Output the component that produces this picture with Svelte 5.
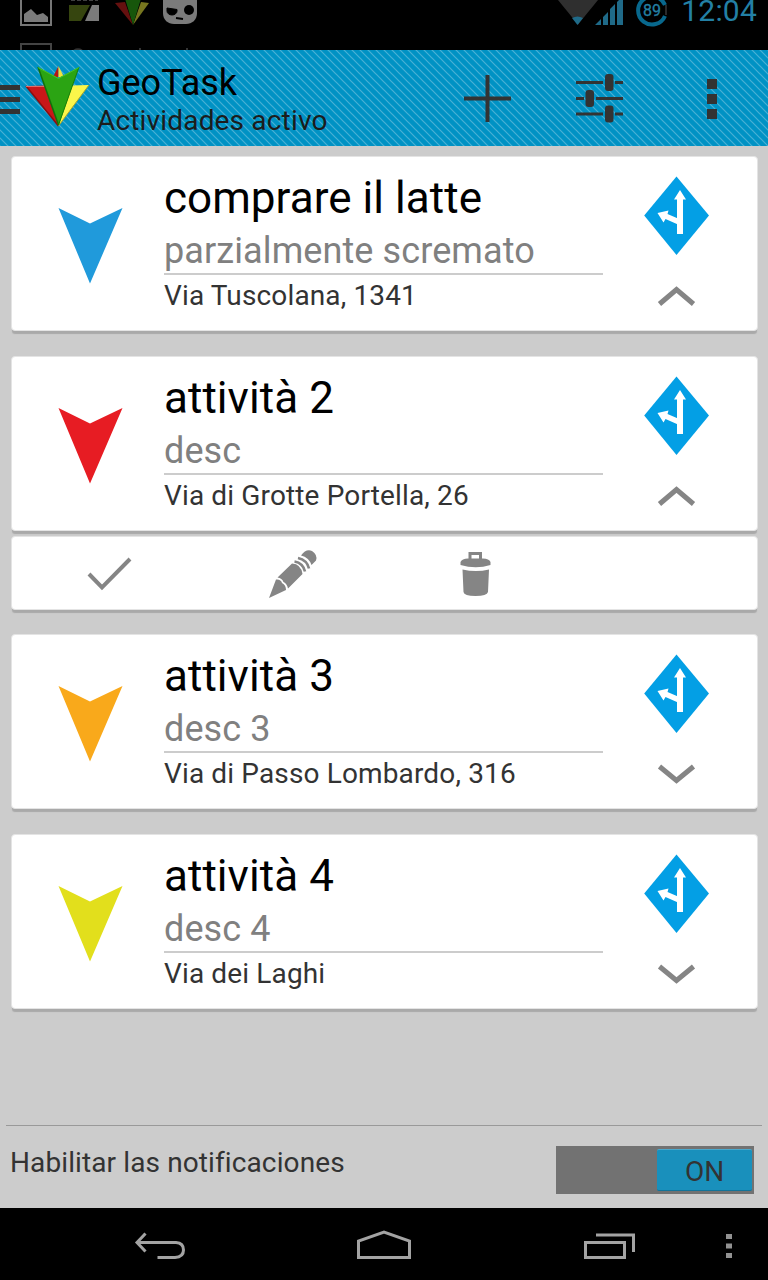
<script lang="ts">
    let notifications = $state(true);

    let tasks = $state([
        { title: 'comprare il latte', desc: 'parzialmente scremato', address: 'Via Tuscolana, 1341', color: '#209adb', up: true, open: false },
        { title: 'attività 2', desc: 'desc', address: 'Via di Grotte Portella, 26', color: '#e71c23', up: true, open: true },
        { title: 'attività 3', desc: 'desc 3', address: 'Via di Passo Lombardo, 316', color: '#f9a91b', up: false, open: false },
        { title: 'attività 4', desc: 'desc 4', address: 'Via dei Laghi', color: '#e2df1c', up: false, open: false }
    ]);

    function toggle(i: number) {
        tasks[i].open = !tasks[i].open;
        tasks[i].up = tasks[i].open;
    }
</script>

<div class="screen">
    <div class="status-bar">
        <svg class="status-icons" width="320" height="50" viewBox="0 0 320 50">
            <path d="M21 -6V25H51V-6" fill="none" stroke="#777" stroke-width="2" />
            <path d="M24 22V14L31 9L37 15L43 13L48 17V22Z" fill="#7b7b7b" />
            <path d="M69 5H90L81 21H69Z" fill="#36450f" />
            <path d="M92 5H99V21H85Z" fill="#7b7b7b" />
            <path d="M71 0H98" stroke="#555" stroke-width="1.5" stroke-dasharray="4 2" />
            <path d="M115 3L125 2L133 25Z" fill="#65100f" />
            <path d="M149 3L141 2L133 25Z" fill="#77761f" />
            <path d="M123 -8L133 -2L143 -8L133 25Z" fill="#17560b" />
            <path d="M163 0H197V13C197 20 192 24 186 24H174C168 24 163 20 163 13Z" fill="#7b7b7b" />
            <path d="M167 8L177 9.500V11A5 4 0 0 1 167 11Z" fill="#000" stroke="#000" />
            <circle cx="189" cy="10" r="5" fill="#000" />
            <path d="M176 18L183 19" stroke="#000" stroke-width="2" />
            <path d="M21 50V44H51V50" fill="none" stroke="#444" stroke-width="2" />
            <path d="M74 50.5Q78 48 82 50.5M140 48V50M187 48V50" fill="none" stroke="#333" stroke-width="2" />
        </svg>
        <div class="status-right">
            <svg width="115" height="50" viewBox="555 0 115 50">
                <path d="M559 0H599L579 24.5Z" fill="#2f2f2f" />
                <path d="M573 18Q578.500 15 584 18L578.500 25Z" fill="#1f6a88" />
                <path d="M596 25L602 19V25ZM604 25V17L609 12V25ZM611 25V9L616 4V25ZM618 25V2L620 0H624V25Z" fill="#1f6a88" />
                <path d="M666 16A14 14 0 1 1 666 5" fill="none" stroke="#08688d" stroke-width="4" />
                <path d="M667 15V5" stroke="#555" />
                <text x="653" y="16" text-anchor="middle" font-size="16" fill="#2380a5" stroke="#2380a5" stroke-width="0.3">89</text>
            </svg>
            <span class="clock">12:04</span>
        </div>
    </div>

    <header class="action-bar">
        <svg class="stripes" width="768" height="96">
            <defs>
                <pattern id="hatch" width="8" height="8" patternUnits="userSpaceOnUse">
                    <rect width="8" height="8" fill="#0092c4" />
                    <path d="M-1 -1L9 9M-1 7L1 9M7 -1L9 1" stroke="#48b0d5" stroke-width="1.2" />
                </pattern>
            </defs>
            <rect width="768" height="96" fill="url(#hatch)" />
        </svg>
        <svg class="logo" width="90" height="96" viewBox="0 50 90 96">
            <path d="M0 85H20V90H0ZM0 97H20V102H0ZM0 109H20V114H0Z" fill="#333" />
            <path d="M58.500 66L53 77H58.500Z" fill="#b81514" />
            <path d="M58.500 66L64 77H58.500Z" fill="#eee341" />
            <path d="M26 86L47 85.500L58.500 126Z" fill="#c91719" />
            <path d="M26 86L58.500 126" stroke="#8b0f10" stroke-width="1.500" />
            <path d="M26 86.500H46" stroke="#e46a63" />
            <path d="M89 85L70 85.500L58.500 126Z" fill="#fbf64a" />
            <path d="M89 85L58.500 126" stroke="#a8a42b" />
            <path d="M38 67L58.500 78L79 67L58.500 126Z" fill="#2ba413" />
            <path d="M38 67L58.500 125" stroke="#12700a" stroke-width="1.500" />
            <path d="M79 67L58.500 125" stroke="#188007" />
            <path d="M38 67.500L58.500 78.500L79 67.500" fill="none" stroke="#45c42b" />
        </svg>
        <div class="titles">
            <h1>GeoTask</h1>
            <p>Actividades activo</p>
        </div>
        <svg class="menu" width="328" height="96" viewBox="440 50 328 96">
            <path d="M464 98.500H511M487.500 75V122" stroke="#333" stroke-width="4" />
            <path d="M576 82.500H603M615 82.500H623M576 98.500H584M596 98.500H623M576 114H603M615 114H623" stroke="#333" stroke-width="3" />
            <rect x="605" y="74" width="8.500" height="17" rx="3" fill="#333" />
            <rect x="585.500" y="90" width="8.500" height="17" rx="3" fill="#333" />
            <rect x="605" y="105.500" width="8.500" height="17" rx="3" fill="#333" />
            <path d="M707 79H717V89H707ZM707 94H717V104H707ZM707 109H717V119H707Z" fill="#333" />
        </svg>
    </header>

    <main>
        {#each tasks as task, i}
            <div class="task">
                <article class="card">
                    <svg class="marker" width="66" height="78" viewBox="0 0 66 78">
                        <path d="M0.500 1L32 16.500L64.500 1L32 76.500Z" fill={task.color} />
                    </svg>
                    <div class="info">
                        <h2>{task.title}</h2>
                        <p class="desc">{task.desc}</p>
                        <p class="address">{task.address}</p>
                    </div>
                    <div class="side">
                        <svg width="66" height="80" viewBox="0 0 66 80">
                            <path d="M32.500 0.500L65 39.500L32.500 79L0.200 39.500Z" fill="#039fe5" />
                            <path d="M33 58V23.500H30L36 14L42 23.500H39V58Z" fill="#fff" />
                            <path d="M13.500 37L24.500 34.500L23.500 38L34 42.500V48.500L21.500 43L19.500 46.500Z" fill="#fff" />
                        </svg>
                        <button class="expand" aria-label="Dettagli" onclick={() => toggle(i)}>
                            <svg width="40" height="22" viewBox="0 0 40 22">
                                <path d={task.up ? 'M2.500 19L19.500 4.500L36.500 19' : 'M2.500 3.500L19.500 17.500L36.500 3.500'} fill="none" stroke="#858585" stroke-width="5" />
                            </svg>
                        </button>
                    </div>
                </article>
                {#if task.open}
                    <div class="card actions">
                        <svg width="500" height="72" viewBox="12 537 500 72">
                            <path d="M89 574L102 587.500L130 559" fill="none" stroke="#858585" stroke-width="4" />
                            <path d="M269 598L276 579.500Q281 579 282 583Q286 585 286 590Z" fill="#858585" />
                            <path d="M277.500 577.500L292 563.500Q301 564 302.500 574L288 588.500Q287 583.500 283.500 582Q282 578 277.500 577.500Z" fill="#858585" />
                            <path d="M294.500 561.500Q303 563 305 571.500M298 558Q307 560 309 568.500" fill="none" stroke="#858585" stroke-width="2.600" />
                            <path d="M301 555.500Q306 548.500 312 551Q318 555 316 560.500L311.500 565Q309 557.500 301 555.500Z" fill="#858585" />
                            <path d="M470 560V553.500H480.500V560" fill="none" stroke="#858585" stroke-width="3" />
                            <path d="M460.500 562Q462 558.500 468 558.500H483Q489 558.500 490.500 562V565Q476 569.500 460.500 565Z" fill="#858585" />
                            <path d="M462.500 569.500Q476 572.500 489 569.500L488 592Q487 596 475.500 596Q464 596 463.500 592Z" fill="#858585" />
                        </svg>
                    </div>
                {/if}
            </div>
        {/each}
    </main>

    <footer>
        <span class="label">Habilitar las notificaciones</span>
        <button class="switch" class:off={!notifications} onclick={() => (notifications = !notifications)}>
            <span class="thumb">{notifications ? 'ON' : 'OFF'}</span>
        </button>
    </footer>

    <nav>
        <svg width="768" height="72" viewBox="0 1208 768 72">
            <g fill="none" stroke="#a3a3a3" stroke-width="3">
                <path d="M137 1242.500H176Q183.500 1243 183.500 1250T175 1257.500H157.500" />
                <path d="M145.500 1233.500L137 1242.500L145.500 1251.500" />
                <path d="M358.500 1257.500V1241L384 1232L409.500 1241V1257.500Z" />
                <path d="M585.500 1242.500H624.500V1257.500H585.500Z" />
                <path d="M596 1235H633.500V1252" />
            </g>
            <path d="M726 1234H732V1239H726ZM726 1243.500H732V1248.500H726ZM726 1253H732V1258H726Z" fill="#929292" />
        </svg>
    </nav>
</div>

<style>
    :global(body) {
        background: #ccc;
    }

    .screen {
        display: flex;
        flex-direction: column;
        width: 768px;
        height: 1280px;
        overflow: hidden;
        background: #ccc;
        font-family: Roboto, "Liberation Sans", sans-serif;
    }

    h1, h2, p {
        margin: 0;
        font-weight: 400;
        white-space: nowrap;
    }

    svg {
        display: block;
        flex: none;
    }

    button {
        padding: 0;
        border: none;
        background: none;
        font: inherit;
        cursor: pointer;
    }

    .status-bar {
        display: flex;
        justify-content: space-between;
        height: 50px;
        background: #000;
    }

    .status-right {
        display: flex;
        padding-right: 11px;
        gap: 12px;
    }

    .clock {
        height: 22px;
        line-height: 22px;
        font-size: 30px;
        letter-spacing: 0.2px;
        color: #2380a5;
    }

    .action-bar {
        position: relative;
        display: flex;
        height: 96px;
    }

    .stripes {
        position: absolute;
        inset: 0;
    }

    .logo, .titles, .menu {
        position: relative;
    }

    .titles {
        flex: 1;
        padding: 12px 0 0 7px;
    }

    h1 {
        font-size: 36px;
        line-height: 43px;
        color: #000;
    }

    .titles p {
        font-size: 28px;
        line-height: 32px;
        letter-spacing: 0.17px;
        color: #1c1c1c;
    }

    main {
        flex: 1;
        padding: 10px 10px 0 11px;
    }

    .task {
        height: 200px;
    }

    .task:has(.actions) {
        height: 278px;
    }

    .card {
        display: flex;
        box-sizing: border-box;
        height: 175px;
        border: 1px solid #e4e4e4;
        border-radius: 4px;
        background: #fff;
        box-shadow: 0 4px 1px -1px #a9a9a9;
    }

    .marker {
        margin: 50px 40px 0 46px;
    }

    .info {
        width: 439px;
        margin-right: 41px;
    }

    h2 {
        padding-top: 14px;
        font-size: 44px;
        line-height: 54px;
        letter-spacing: 0.05px;
        color: #000;
    }

    .desc {
        height: 48px;
        border-bottom: 2px solid #ccc;
        font-size: 36px;
        line-height: 52px;
        letter-spacing: 0.1px;
        color: #808080;
    }

    .address {
        font-size: 28px;
        line-height: 41px;
        letter-spacing: 0.14px;
        color: #333;
    }

    .side {
        display: flex;
        flex-direction: column;
        align-items: center;
        padding-top: 19px;
        gap: 29px;
    }

    .actions {
        height: 74px;
        margin-top: 5px;
    }

    footer {
        display: flex;
        justify-content: space-between;
        box-sizing: border-box;
        height: 83px;
        margin: 0 6px;
        padding: 20px 8px 0 4px;
        border-top: 1px solid #999;
    }

    .label {
        font-size: 28px;
        line-height: 33px;
        letter-spacing: 0.11px;
        color: #333;
    }

    .switch {
        display: flex;
        justify-content: flex-end;
        box-sizing: border-box;
        width: 198px;
        height: 48px;
        padding: 3px 2px;
        background: #727272;
    }

    .switch.off {
        justify-content: flex-start;
    }

    .thumb {
        box-sizing: border-box;
        width: 95px;
        height: 42px;
        border-top: 1px solid #4aa9cd;
        border-bottom: 1px solid #12749a;
        border-radius: 2px;
        background: #1990bc;
        font-size: 28px;
        line-height: 43px;
        text-align: center;
        color: #333;
    }

    nav {
        height: 72px;
        background: #000;
    }
</style>
